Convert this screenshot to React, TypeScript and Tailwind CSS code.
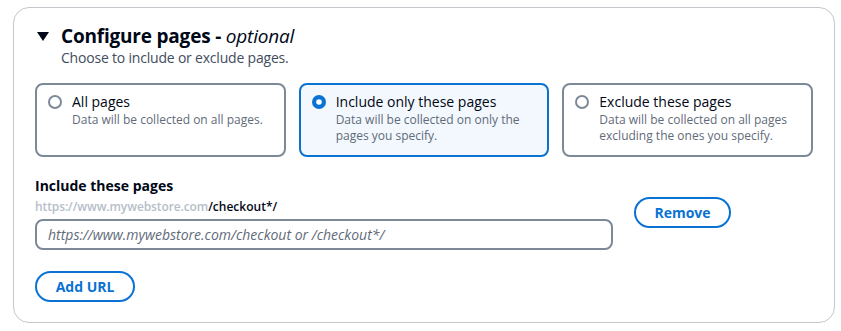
import React, { useState } from 'react'

const options = [
  { id: 'all', label: 'All pages', desc: 'Data will be collected on all pages.' },
  {
    id: 'include',
    label: 'Include only these pages',
    desc: 'Data will be collected on only the pages you specify.',
  },
  {
    id: 'exclude',
    label: 'Exclude these pages',
    desc: 'Data will be collected on all pages excluding the ones you specify.',
  },
]

function Radio({ checked }: { checked: boolean }) {
  return (
    <svg width="14" height="14" viewBox="0 0 14 14" className="shrink-0 mt-[3px]">
      {checked ? (
        <>
          <circle cx="7" cy="7" r="7" fill="#0972d3" />
          <circle cx="7" cy="7" r="2.8" fill="#ffffff" />
        </>
      ) : (
        <circle cx="7" cy="7" r="6" fill="#ffffff" stroke="#7d8998" strokeWidth="2" />
      )}
    </svg>
  )
}

export default function App() {
  const [selected, setSelected] = useState('include')

  return (
    <div className="w-[841px] h-[331px] bg-white pt-[7px] pl-[13px] font-['Open_Sans',sans-serif] text-[#000716]">
      <div className="w-[822px] h-[316px] border border-[#c6c6cd] rounded-[16px] pt-[16px] px-[21px]">
        <div className="flex items-center">
          <svg width="12" height="9" viewBox="0 0 12 9" className="ml-[2px] mr-[12px]">
            <path d="M0 0 H12 L6 9 Z" fill="#000716" />
          </svg>
          <h2 className="text-[19px] leading-[24px] font-bold tracking-[-0.2px]">
            Configure pages - <i className="font-medium">optional</i>
          </h2>
        </div>
        <p className="ml-[26px] text-[14px] leading-[20px] tracking-[-0.2px] text-[#414d5c]">
          Choose to include or exclude pages.
        </p>

        <div className="mt-[15px] grid grid-cols-3 gap-[13px]">
          {options.map((o) => {
            const on = selected === o.id
            return (
              <button
                key={o.id}
                onClick={() => setSelected(o.id)}
                className={
                  on
                    ? 'h-[74px] rounded-[8px] border-2 border-[#0972d3] bg-[#f2f8fd] text-left flex gap-[10px] pt-[7px] pl-[11px] pr-[10px]'
                    : 'h-[74px] rounded-[8px] border-2 border-[#7d8998] bg-white text-left flex gap-[10px] pt-[7px] pl-[11px] pr-[10px]'
                }
              >
                <Radio checked={on} />
                <span className="flex flex-col">
                  <span className="text-[14px] leading-[20px]">{o.label}</span>
                  <span className="text-[12px] leading-[16px] text-[#5f6b7a]">{o.desc}</span>
                </span>
              </button>
            )
          })}
        </div>

        <div className="mt-[19px] text-[14px] leading-[20px] font-bold">Include these pages</div>
        <div className="flex gap-[21px]">
          <div className="flex flex-col w-[578px]">
            <div className="text-[12px] leading-[16px] font-semibold mt-[3px]">
              <span className="text-[#b6bec9] tracking-[-0.1px]">https://www.mywebstore.com</span>
              <span>/checkout*/</span>
            </div>
            <input
              placeholder="https://www.mywebstore.com/checkout or /checkout*/"
              className="mt-[4px] h-[31px] w-full rounded-[8px] border-2 border-[#7d8998] px-[11px] text-[14px] italic placeholder:text-[#5f6b7a] outline-none"
            />
          </div>
          <button className="mt-[1px] h-[31px] w-[97px] rounded-full border-2 border-[#0972d3] text-[14px] font-bold text-[#0972d3]">
            Remove
          </button>
        </div>

        <button className="mt-[21px] h-[31px] w-[100px] rounded-full border-2 border-[#0972d3] text-[14px] font-bold text-[#0972d3]">
          Add URL
        </button>
      </div>
    </div>
  )
}
